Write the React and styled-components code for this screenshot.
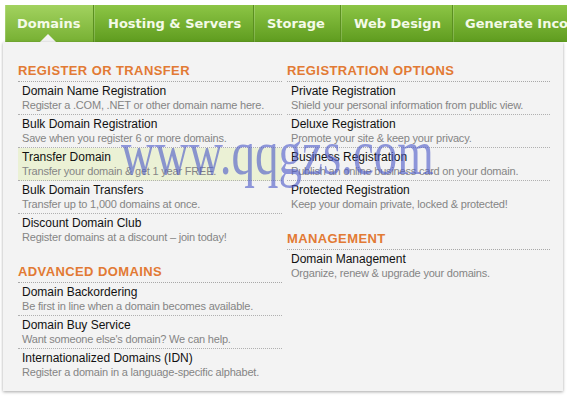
import React from "react";
import styled, { createGlobalStyle } from "styled-components";

const GlobalStyle = createGlobalStyle`
  body {
    margin: 0;
    background: #fff;
    font-family: "Liberation Sans", Arial, sans-serif;
  }
`;

const Page = styled.div`
  position: relative;
  width: 567px;
  height: 398px;
  overflow: hidden;
  padding-top: 5px;
  box-sizing: border-box;
`;

const NavBar = styled.ul`
  display: flex;
  margin: 0 0 0 5px;
  padding: 0;
  list-style: none;
  height: 37px;
  background: linear-gradient(#8cc545, #5f9c1f);
  white-space: nowrap;
`;

const Tab = styled.li`
  position: relative;
  display: flex;
  align-items: center;
  flex: 0 0 auto;
  width: ${p => p.$w}px;
  padding-left: ${p => p.$pl}px;
  box-sizing: border-box;
  font-family: "DejaVu Sans", Verdana, sans-serif;
  font-weight: bold;
  font-size: 13px;
  color: #f4fae8;
  border-right: 1px solid #5b9020;
  box-shadow: inset 1px 0 0 rgba(255, 255, 255, 0.18);
  background: ${p => (p.$active ? "linear-gradient(#a2d25f, #77b033)" : "transparent")};

  &:last-child {
    border-right: 0;
  }
`;

const Notch = styled.span`
  position: absolute;
  left: 35px;
  bottom: 0;
  width: 0;
  height: 0;
  border-left: 8px solid transparent;
  border-right: 8px solid transparent;
  border-bottom: 8px solid #f3f3f3;
`;

const Panel = styled.div`
  position: relative;
  margin-left: 3px;
  width: 560px;
  height: 349px;
  background: #f3f3f3;
  box-shadow: 0 1px 3px rgba(0, 0, 0, 0.35);
  display: grid;
  grid-template-columns: 264px 263px;
  column-gap: 5px;
  padding: 21px 0 0 15px;
  box-sizing: border-box;
  align-items: start;
`;

const Column = styled.div`
  display: flex;
  flex-direction: column;
  gap: 18px;
`;

const Section = styled.section``;

const Heading = styled.h3`
  margin: 0;
  font-size: 13px;
  line-height: 16px;
  letter-spacing: 0.4px;
  font-weight: bold;
  color: #e27a34;
  padding-bottom: 2px;
  border-bottom: 1px dotted #a8a8a8;
`;

const Item = styled.div`
  padding: 2px 4px;
  background: ${p => (p.$hover ? "#ebf1d5" : "transparent")};
  border-bottom: 1px dotted #b0b0b0;

  &:last-child {
    border-bottom: 0;
  }
`;

const Title = styled.div`
  font-size: 12px;
  line-height: 14px;
  color: #111;
`;

const Desc = styled.div`
  font-size: 11px;
  line-height: 14px;
  letter-spacing: -0.2px;
  color: #858585;
`;

const Watermark = styled.div`
  position: absolute;
  left: 121px;
  top: 137px;
  font-family: "Liberation Serif", "Times New Roman", serif;
  font-size: 47px;
  line-height: 46px;
  color: rgba(78, 90, 200, 0.62);
  transform: scaleY(1.35);
  transform-origin: left bottom;
  pointer-events: none;
  white-space: nowrap;
`;

const tabs = [
  { label: "Domains", w: 89, pl: 12, active: true },
  { label: "Hosting & Servers", w: 160, pl: 14 },
  { label: "Storage", w: 87, pl: 13 },
  { label: "Web Design", w: 112, pl: 13 },
  { label: "Generate Income", w: 140, pl: 12 },
];

const columns = [
  [
    {
      heading: "REGISTER OR TRANSFER",
      items: [
        ["Domain Name Registration", "Register a .COM, .NET or other domain name here."],
        ["Bulk Domain Registration", "Save when you register 6 or more domains."],
        ["Transfer Domain", "Transfer your domain & get 1 year FREE.", true],
        ["Bulk Domain Transfers", "Transfer up to 1,000 domains at once."],
        ["Discount Domain Club", "Register domains at a discount \u2013 join today!"],
      ],
    },
    {
      heading: "ADVANCED DOMAINS",
      items: [
        ["Domain Backordering", "Be first in line when a domain becomes available."],
        ["Domain Buy Service", "Want someone else's domain? We can help."],
        ["Internationalized Domains (IDN)", "Register a domain in a language-specific alphabet."],
      ],
    },
  ],
  [
    {
      heading: "REGISTRATION OPTIONS",
      items: [
        ["Private Registration", "Shield your personal information from public view."],
        ["Deluxe Registration", "Promote your site & keep your privacy."],
        ["Business Registration", "Publish an online business card on your domain."],
        ["Protected Registration", "Keep your domain private, locked & protected!"],
      ],
    },
    {
      heading: "MANAGEMENT",
      items: [["Domain Management", "Organize, renew & upgrade your domains."]],
    },
  ],
];

export default function App() {
  return (
    <Page>
      <GlobalStyle />
      <NavBar>
        {tabs.map(t => (
          <Tab key={t.label} $w={t.w} $pl={t.pl} $active={t.active}>
            {t.label}
            {t.active && <Notch />}
          </Tab>
        ))}
      </NavBar>
      <Panel>
        {columns.map((col, i) => (
          <Column key={i}>
            {col.map(sec => (
              <Section key={sec.heading}>
                <Heading>{sec.heading}</Heading>
                {sec.items.map(([title, desc, hover]) => (
                  <Item key={title} $hover={hover}>
                    <Title>{title}</Title>
                    <Desc>{desc}</Desc>
                  </Item>
                ))}
              </Section>
            ))}
          </Column>
        ))}
      </Panel>
      <Watermark>www.qqgzs.com</Watermark>
    </Page>
  );
}
